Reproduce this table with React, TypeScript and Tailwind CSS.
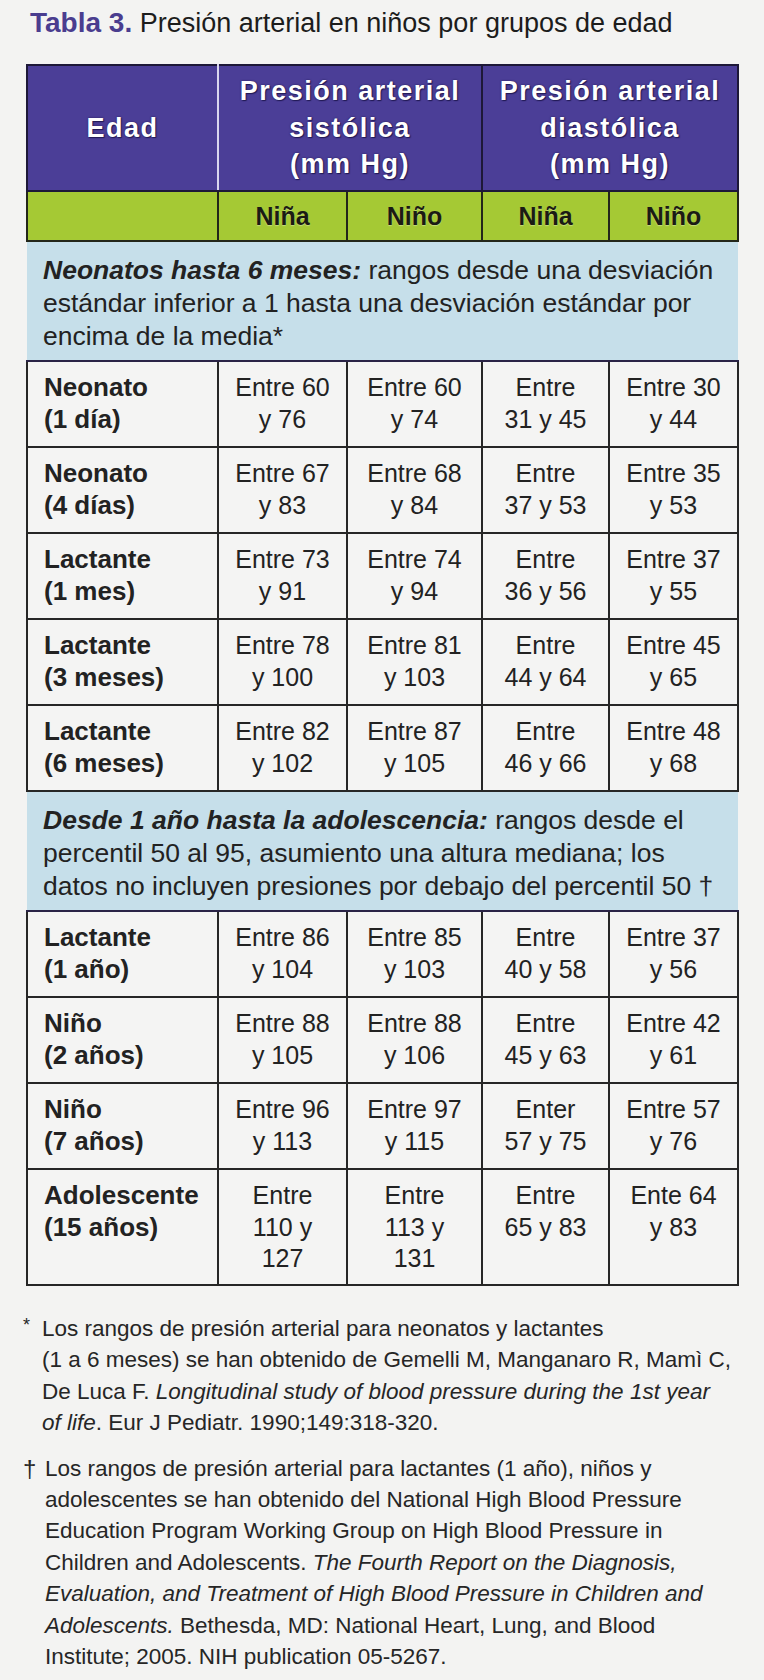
import React from 'react';

type Row = {
  label: string[];
  values: string[][];
  tall?: boolean;
};

const infantRows: Row[] = [
  { label: ['Neonato', '(1 día)'], values: [['Entre 60', 'y 76'], ['Entre 60', 'y 74'], ['Entre', '31 y 45'], ['Entre 30', 'y 44']] },
  { label: ['Neonato', '(4 días)'], values: [['Entre 67', 'y 83'], ['Entre 68', 'y 84'], ['Entre', '37 y 53'], ['Entre 35', 'y 53']] },
  { label: ['Lactante', '(1 mes)'], values: [['Entre 73', 'y 91'], ['Entre 74', 'y 94'], ['Entre', '36 y 56'], ['Entre 37', 'y 55']] },
  { label: ['Lactante', '(3 meses)'], values: [['Entre 78', 'y 100'], ['Entre 81', 'y 103'], ['Entre', '44 y 64'], ['Entre 45', 'y 65']] },
  { label: ['Lactante', '(6 meses)'], values: [['Entre 82', 'y 102'], ['Entre 87', 'y 105'], ['Entre', '46 y 66'], ['Entre 48', 'y 68']] },
];

const childRows: Row[] = [
  { label: ['Lactante', '(1 año)'], values: [['Entre 86', 'y 104'], ['Entre 85', 'y 103'], ['Entre', '40 y 58'], ['Entre 37', 'y 56']] },
  { label: ['Niño', '(2 años)'], values: [['Entre 88', 'y 105'], ['Entre 88', 'y 106'], ['Entre', '45 y 63'], ['Entre 42', 'y 61']] },
  { label: ['Niño', '(7 años)'], values: [['Entre 96', 'y 113'], ['Entre 97', 'y 115'], ['Enter', '57 y 75'], ['Entre 57', 'y 76']] },
  {
    label: ['Adolescente', '(15 años)'],
    values: [['Entre', '110 y', '127'], ['Entre', '113 y', '131'], ['Entre', '65 y 83'], ['Ente 64', 'y 83']],
    tall: true,
  },
];

const Lines = ({ lines }: { lines: string[] }) => (
  <>
    {lines.map((line, i) => (
      <React.Fragment key={i}>
        {i > 0 && <br />}
        {line}
      </React.Fragment>
    ))}
  </>
);

const SectionRow = ({ lead, lines }: { lead: string; lines: string[] }) => (
  <tr>
    <td
      colSpan={5}
      className="h-[120px] bg-[#c6dfea] border-y-2 border-[#2a2446] pl-[16px] pt-[12px] align-top text-[26.5px] leading-[33px] text-[#222] whitespace-nowrap"
    >
      <span className="font-bold italic">{lead}</span>
      <span className="font-light">
        <Lines lines={lines} />
      </span>
    </td>
  </tr>
);

const DataRow = ({ row }: { row: Row }) => (
  <tr>
    <td
      className={`${row.tall ? 'h-[116px]' : 'h-[86px]'} border-2 border-[#262626] pl-[16px] pt-[10px] align-top font-bold text-[26px] leading-[31.5px] text-[#222] whitespace-nowrap`}
    >
      <Lines lines={row.label} />
    </td>
    {row.values.map((v, i) => (
      <td
        key={i}
        className="border-2 border-[#262626] pt-[10px] align-top text-center text-[25px] leading-[31.5px] text-[#222] whitespace-nowrap"
      >
        <Lines lines={v} />
      </td>
    ))}
  </tr>
);

const headShadow = '[text-shadow:0_0_2px_#221a55,1px_1px_1px_#221a55]';

export default function App() {
  return (
    <div className="w-[764px] h-[1680px] bg-[#f3f3f2] font-['Liberation_Sans',Arial,sans-serif] text-[#222]">
      <h1 className="h-[40px] pt-[6px] pl-[30px] leading-[34px] whitespace-nowrap">
        <span className="font-bold text-[28px] text-[#4a3d8f]">Tabla 3.</span>
        <span className="text-[27px] text-[#1c1c1c]"> Presión arterial en niños por grupos de edad</span>
      </h1>

      <table className="mt-[24px] ml-[26px] w-[711px] table-fixed border-collapse">
        <colgroup>
          <col className="w-[191px]" />
          <col className="w-[129px]" />
          <col className="w-[135px]" />
          <col className="w-[127px]" />
          <col className="w-[129px]" />
        </colgroup>
        <thead>
          <tr className="bg-[#4b3e97] text-white">
            <th className={`h-[126px] border-2 border-[#1d1838] border-r-[#d9d6ee] align-middle font-bold text-[27px] leading-[36px] tracking-[1.5px] ${headShadow}`}>
              Edad
            </th>
            <th colSpan={2} className={`border-y-2 border-[#1d1838] border-r border-r-[#d9d6ee] align-middle font-bold text-[27px] leading-[36.5px] tracking-[1.5px] whitespace-nowrap ${headShadow}`}>
              Presión arterial
              <br />
              sistólica
              <br />
              (mm Hg)
            </th>
            <th colSpan={2} className={`border-2 border-[#1d1838] align-middle font-bold text-[27px] leading-[36.5px] tracking-[1.5px] whitespace-nowrap ${headShadow}`}>
              Presión arterial
              <br />
              diastólica
              <br />
              (mm Hg)
            </th>
          </tr>
          <tr className="bg-[#a5c934] text-[#1b1b14]">
            <th className="h-[50px] border-2 border-[#23261a]"></th>
            {['Niña', 'Niño', 'Niña', 'Niño'].map((s, i) => (
              <th
                key={i}
                className="border-2 border-[#23261a] font-bold text-[25px] leading-[30px] [text-shadow:0_1px_1px_rgba(255,255,255,0.35)]"
              >
                {s}
              </th>
            ))}
          </tr>
        </thead>
        <tbody className="bg-[#f4f4f3]">
          <SectionRow
            lead="Neonatos hasta 6 meses:"
            lines={[' rangos desde una desviación', 'estándar inferior a 1 hasta una desviación estándar por', 'encima de la media*']}
          />
          {infantRows.map((row, i) => (
            <DataRow key={i} row={row} />
          ))}
          <SectionRow
            lead="Desde 1 año hasta la adolescencia:"
            lines={[' rangos desde el', 'percentil 50 al 95, asumiento una altura mediana; los', 'datos no incluyen presiones por debajo del percentil 50 †']}
          />
          {childRows.map((row, i) => (
            <DataRow key={i} row={row} />
          ))}
        </tbody>
      </table>

      <div className="mt-[27px] flex flex-col gap-[14px] text-[22.5px] leading-[31.4px] text-[#262626] whitespace-nowrap">
        <div className="flex pl-[23px]">
          <span className="w-[19px] text-[18px] leading-[24px]">*</span>
          <p>
            Los rangos de presión arterial para neonatos y lactantes
            <br />
            (1 a 6 meses) se han obtenido de Gemelli M, Manganaro R, Mamì C,
            <br />
            De Luca F. <i>Longitudinal study of blood pressure during the 1st year</i>
            <br />
            <i>of life</i>. Eur J Pediatr. 1990;149:318-320.
          </p>
        </div>
        <div className="flex pl-[23px]">
          <span className="w-[22px] text-[24px]">†</span>
          <p>
            Los rangos de presión arterial para lactantes (1 año), niños y
            <br />
            adolescentes se han obtenido del National High Blood Pressure
            <br />
            Education Program Working Group on High Blood Pressure in
            <br />
            Children and Adolescents. <i>The Fourth Report on the Diagnosis,</i>
            <br />
            <i>Evaluation, and Treatment of High Blood Pressure in Children and</i>
            <br />
            <i>Adolescents.</i> Bethesda, MD: National Heart, Lung, and Blood
            <br />
            Institute; 2005. NIH publication 05-5267.
          </p>
        </div>
      </div>
    </div>
  );
}
